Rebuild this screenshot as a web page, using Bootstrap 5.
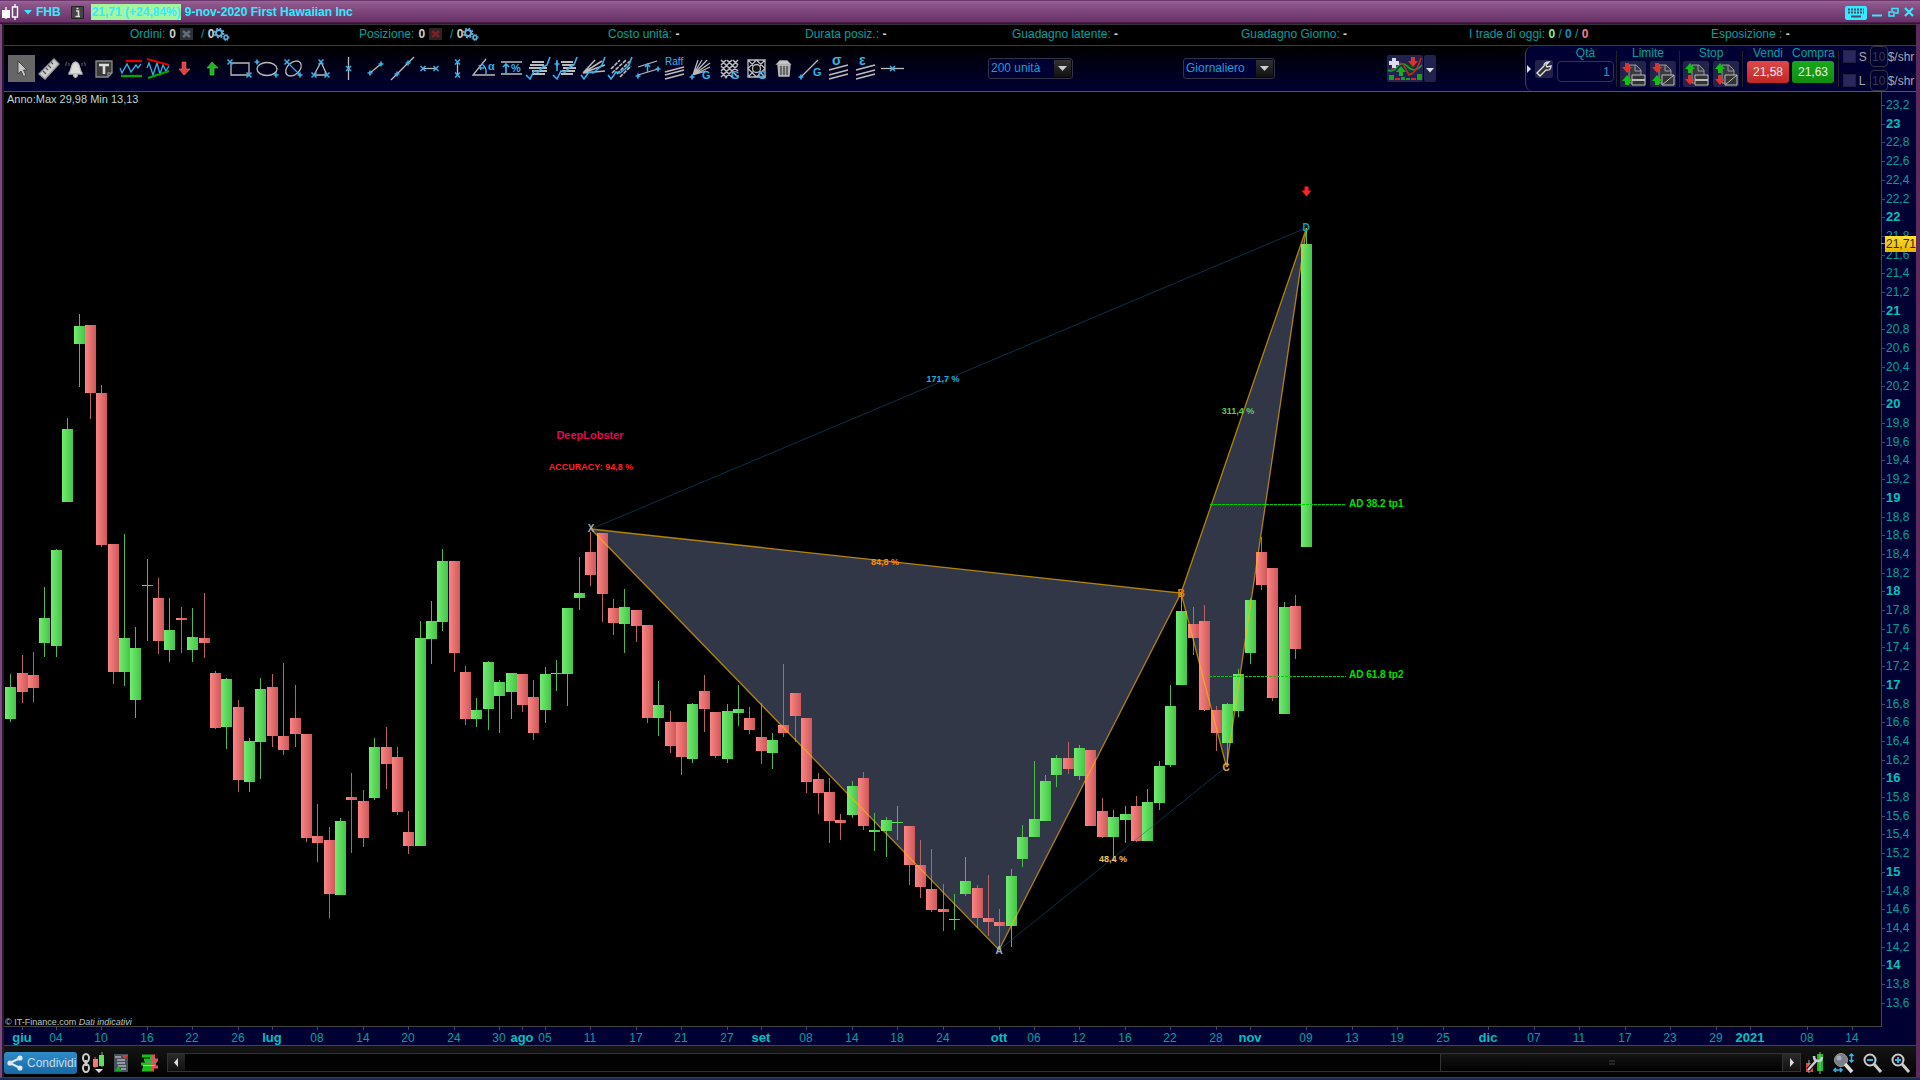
<!DOCTYPE html>
<html lang="it">
<head>
<meta charset="utf-8">
<meta name="viewport" content="width=device-width, initial-scale=1">
<title>FHB - First Hawaiian Inc</title>
<link href="https://cdn.jsdelivr.net/npm/bootstrap@5.3.0/dist/css/bootstrap.min.css" rel="stylesheet">
<style>
:root{--teal:#00a0a0;--aqua:#35eaff;--navy:#000033;--edge:#3c3c3c;--pick:#35b4e8}
body{background:#000;color:var(--teal);font:12px/16px "Liberation Sans",Arial,sans-serif;overflow:hidden}
.frame{min-height:0;background:#000;border:solid #5e2a5e;border-width:0 4px 1px 4px;border-left-style:ridge;border-left-color:#7c4a80}
.desk{height:2px;background:#1b2a52}
button{font:inherit;color:inherit;background:none;border:0;padding:0;display:block}
svg{display:block;overflow:visible;flex-shrink:0}
.titlebar{height:24px;margin:0 -4px;padding:0 6px 0 2px;background:linear-gradient(#4b184b 0,#9a6298 5%,#8a5488 20%,#673067 92%,#3a103a 95%);color:var(--aqua);font-weight:bold}
.info{margin-left:10px}
.quote{background:#a5f5a0;padding:1px 0 1px 1px;line-height:14px;margin-left:7px}
.winbtns{gap:5px}
.stats{height:22px;padding:0 0 2px 126px;display:grid;grid-template-columns:229fr 249fr 197fr 207fr 229fr 228fr 242fr 205fr;align-items:center;border-bottom:1px solid var(--edge);border-top:1px solid #333}
.stats b{color:#d0d0d0}
.stats .won{color:#90e890}
.stats .even{color:#1888c0}
.stats .lost{color:#f08080}
.toolbar{height:46px;padding-bottom:1px;background:linear-gradient(#000,#000033);border-bottom:1px solid #555}
.tools{width:898px;margin-left:4px}
.tools svg{width:27px;height:27px;fill:none;stroke:#bbb;stroke-width:1.3}
.tools .on{background:#666}
.tools .c{stroke:var(--pick)}
.tools text{font:bold 11px "Liberation Sans",Arial,sans-serif;fill:var(--pick);stroke:none}
.tools .plain{font-size:10px;font-weight:400}
.tools .greek{font-size:14px}
.pickbox{height:21px}
.pickbox select{appearance:none;width:100%;height:21px;font:inherit;color:#0f9fd8;background:var(--navy);border:1px solid #333348;border-radius:3px;padding:0 2px}
.pickbox .knob{position:absolute;right:2px;top:2px;width:17px;height:17px;background:linear-gradient(#333,#111);pointer-events:none}
.units{width:85px;margin-left:82px}
.period{width:92px;margin-left:110px}
.indic{margin-left:112px;height:27px;gap:1px}
.indic .face,.indic .drop{background:#22224f;height:27px;border-radius:2px}
.order{width:391px;height:45px;background:var(--navy);border-left:1px solid #444;border-radius:8px 0 0 8px}
.sq{background:#22224a;border-radius:2px}
.sep{width:1px;height:36px;background:#222;align-self:center}
.qtybox{margin:0 2px 0 4px}
.pair{padding:0 3px}
.fieldbox{background:#000030;border:1px solid #333344;border-radius:4px;color:#0f9fd8;font:inherit;text-align:right;padding:0 3px}
.qty{width:57px;height:21px}
.capt{line-height:14px;height:15px;text-align:center}
.deals{gap:3px;margin:0 3px 0 4px}
.deal{width:42px;height:22px;color:#f0f0f0;border-radius:3px}
.sell{background:linear-gradient(#e04848,#c02828)}
.buy{background:linear-gradient(#18a818,#0f8c0f)}
.tick{appearance:none;width:13px;height:13px;background:#28285c;border:1px solid #202044;margin:0}
.tag{width:8px;margin:0 3px}
.small10{width:18px;height:21px;color:#383850;padding:0 1px;text-align:center}
.exits{color:#aaa}
.plot{min-height:0}
.plot svg{width:100%;height:100%;font-family:"Liberation Sans",Arial,sans-serif;font-size:12px}
.footbar{height:31px;padding-top:2px;background:linear-gradient(#151515,#020202)}
.share{width:73px;height:22px;padding-left:3px;background:linear-gradient(#2f8cc8,#1768a4);border-radius:3px;color:#c8dcec}
.depth{margin-left:13px}
.scroller{height:19px;border:1px solid #333;background:#020202}
.scroller button{width:17px;height:17px;background:linear-gradient(#2a2a2a,#111)}
.thumb{width:21%;height:17px;background:linear-gradient(#151515,#000);border:solid #333;border-width:0 1px}
.zooms{margin:0 6px 0 4px}
</style>
<script src="https://cdn.jsdelivr.net/npm/bootstrap@5.3.0/dist/js/bootstrap.bundle.min.js"></script>
</head>
<body>
<svg width="0" height="0" class="position-absolute" aria-hidden="true">
<defs>
<g id="mx"><path d="M-2.5-2.5l5 5M2.5-2.5l-5 5" stroke="#35b4e8" stroke-width="1.5"/></g>
<g id="mp"><path d="M-2.5 0h5M0-2.5v5" stroke="#35b4e8" stroke-width="1.7"/></g>
<g id="gears" fill="none" stroke="#5fb0dc"><circle cx="5" cy="5" r="3" stroke-width="2"/><circle cx="5" cy="5" r="4.6" stroke-width="1.6" stroke-dasharray="1.9 1.7"/><circle cx="12" cy="9.500" r="1.900" stroke-width="1.500"/><circle cx="12" cy="9.500" r="3" stroke-dasharray="1.300 1.100"/></g>
<g id="sheet"><path d="M9 4h7l5 5v13H9z" fill="#3a3a44" stroke="#999"/><path d="M15 4v6h6" fill="none" stroke="#999"/></g>
<path id="dn" d="M-2-5h4v4h3L0 5l-5-6h3z"/>
<path id="up" d="M-2 5h4V1h3L0-5l-5 6h3z"/>
</defs>
</svg>
<div class="vh-100 d-flex flex-column">
<div class="frame d-flex flex-column flex-grow-1">

<header class="titlebar d-flex align-items-center text-nowrap">
  <svg width="18" height="20" viewBox="0 0 18 20"><path d="M4 5v12M13 2v16" stroke="#fff" stroke-width="1.300"/><path d="M0 8h8v8H0z" fill="#fff"/><path d="M10.500 5h5v10h-5z" fill="#76447a" stroke="#fff" stroke-width="1.400"/></svg>
  <button class="ms-1" aria-label="Menu"><svg width="8" height="5" viewBox="0 0 8 5"><path d="M0 0h8L4 4.500z" fill="#35eaff"/></svg></button>
  <span class="ms-1">FHB</span>
  <button class="info" aria-label="Informazioni"><svg width="13" height="13" viewBox="0 0 13 13"><path d="M.5.5h12v12H.5z" fill="#444" stroke="#222"/><path d="M5 5h2.500v5M4.500 10.500h4.500M5.500 2.500h2" stroke="#ddd" stroke-width="1.600" fill="none"/></svg></button>
  <span class="quote">21,71 (+24,84%)</span>
  <span class="ms-1">9-nov-2020 First Hawaiian Inc</span>
  <div class="winbtns ms-auto d-flex align-items-center">
    <button aria-label="Tastiera"><svg width="22" height="15" viewBox="0 0 22 15"><rect y="1" width="22" height="14" rx="2" fill="#35eaff"/><path d="M3 4.500h16M3 7.500h16" stroke="#4a4a6a" stroke-width="1.800" stroke-dasharray="2 1"/><path d="M6 11.500h10" stroke="#4a4a6a" stroke-width="2"/></svg></button>
    <button aria-label="Riduci"><svg width="11" height="14" viewBox="0 0 11 14"><path d="M0 10.500h10" stroke="#35eaff" stroke-width="2"/></svg></button>
    <button aria-label="Ripristina"><svg width="11" height="11" viewBox="0 0 11 11" fill="none" stroke="#35eaff" stroke-width="1.500"><path d="M1 5h5v4H1zM4 4V1.500h6V6H7"/></svg></button>
    <button aria-label="Chiudi"><svg width="10" height="10" viewBox="0 0 10 10"><path d="M1 1l8 8M9 1L1 9" stroke="#35eaff" stroke-width="2.200"/></svg></button>
  </div>
</header>

<section class="stats text-nowrap">
  <div class="d-flex align-items-center">Ordini:<b class="ms-1">0</b><svg class="ms-1" width="13" height="12" viewBox="0 0 13 12"><path d="M0 0h13v12H0z" fill="#2c3138"/><path d="M3 3l7 6M10 3L3 9" stroke="#646c78" stroke-width="2.500"/></svg><span class="ms-2">/ <b>0</b></span><svg width="16" height="13" viewBox="0 0 16 13"><use href="#gears"/></svg></div>
  <div class="d-flex align-items-center">Posizione:<b class="ms-1">0</b><svg class="ms-1" width="13" height="12" viewBox="0 0 13 12"><path d="M0 0h13v12H0z" fill="#2c2424"/><path d="M3 3l7 6M10 3L3 9" stroke="#7c2028" stroke-width="2.500"/></svg><span class="ms-2">/ <b>0</b></span><svg width="16" height="13" viewBox="0 0 16 13"><use href="#gears"/></svg></div>
  <div>Costo unità: <b>-</b></div>
  <div>Durata posiz.: <b>-</b></div>
  <div>Guadagno latente: <b>-</b></div>
  <div>Guadagno Giorno: <b>-</b></div>
  <div>I trade di oggi: <b class="won">0</b> / <b class="even">0</b> / <b class="lost">0</b></div>
  <div>Esposizione : <b>-</b></div>
</section>

<section class="toolbar d-flex">
  <div class="tools d-flex justify-content-between align-items-center flex-shrink-0">
    <button class="on" aria-label="Cursore"><svg viewBox="0 0 27 27"><path d="M10 6v13l3-3 2.500 5.500 2.500-1-2.500-5.500h3.500z" fill="#c8c8c8" stroke="#333" stroke-width=".8"/></svg></button>
    <button aria-label="Righello"><svg viewBox="0 0 27 27"><path d="M19 4l5 5L10 24l-6-5z" fill="#ccc" stroke="#999"/><path d="M8 16l3 3M11 13l2 2M13 10l3 3M16 7l2 2" stroke="#555"/></svg></button>
    <button aria-label="Allarme"><svg viewBox="0 0 27 27"><path d="M7 18c3-2 1-10 6.500-11 5.500 1 3.500 9 6.500 11v1H7z" fill="#ddd" stroke="#bbb"/><circle cx="13.500" cy="20.500" r="1.800" fill="#ddd"/><path d="M5 7q-2 2-1 4M7 8v3M22 7q2 2 1 4M20 8v3" stroke="#777" stroke-width=".8"/></svg></button>
    <button aria-label="Testo"><svg viewBox="0 0 27 27"><path d="M6 6h16v12l-4 4H6z" fill="#3c3c3c" stroke="#888"/><path d="M9 10h10M14 10v9" stroke="#ddd" stroke-width="2.600"/><path d="M18 22v-4h4" stroke="#888"/></svg></button>
    <button aria-label="Supporti"><svg viewBox="0 0 27 27"><path class="c" d="M3 13l2 5 5-9 4 8 5-7 2 3 3-4"/><path d="M9 6h16" stroke="#e00000" stroke-width="2.300"/><path d="M4 21h21" stroke="#0a0" stroke-width="2.300"/></svg></button>
    <button aria-label="Figure"><svg viewBox="0 0 27 27"><path class="c" d="M3 13l2-5 4 12 4-12 3 11 3-9 3 6 3-5"/><path d="M3 4l22 6" stroke="#e00000" stroke-width="2.300"/><path d="M4 23l21-7" stroke="#0a0" stroke-width="2.300"/></svg></button>
    <button aria-label="Freccia giù"><svg viewBox="0 0 27 27"><path d="M11 7h4v7h4l-6 6-5-6h3z" fill="#e04040" stroke="#f07070" stroke-width=".6"/></svg></button>
    <button aria-label="Freccia su"><svg viewBox="0 0 27 27"><path d="M11 20h4v-7h4l-6-6-5 6h3z" fill="#20b020" stroke="#50d050" stroke-width=".6"/></svg></button>
    <button aria-label="Rettangolo"><svg viewBox="0 0 27 27"><path d="M5 8h18v12H5z"/><use href="#mx" x="4" y="7"/><use href="#mx" x="23" y="20"/></svg></button>
    <button aria-label="Ellisse"><svg viewBox="0 0 27 27"><ellipse cx="14" cy="14" rx="10" ry="6.500"/><use href="#mp" x="4" y="7"/><use href="#mp" x="23" y="20"/></svg></button>
    <button aria-label="Ellisse inclinata"><svg viewBox="0 0 27 27"><ellipse cx="13.500" cy="13.500" rx="9" ry="6" transform="rotate(-42 13.500 13.500)"/><path class="c" d="M7 7l13 13" stroke-width="1.100"/><use href="#mx" x="7" y="7"/><use href="#mp" x="20" y="20"/></svg></button>
    <button aria-label="Triangolo"><svg viewBox="0 0 27 27"><path d="M14 7l6 13H7z"/><use href="#mx" x="14" y="7"/><use href="#mx" x="20" y="20"/><use href="#mx" x="7" y="20"/></svg></button>
    <button aria-label="Linea verticale"><svg viewBox="0 0 27 27"><path d="M13.500 2v23"/><use href="#mx" x="13.500" y="13.500"/></svg></button>
    <button aria-label="Segmento"><svg viewBox="0 0 27 27"><path d="M8 18l11-9"/><use href="#mp" x="8" y="18"/><use href="#mp" x="19" y="9"/></svg></button>
    <button aria-label="Retta"><svg viewBox="0 0 27 27"><path d="M2 25L25 2"/><use href="#mp" x="8" y="19"/><use href="#mp" x="19" y="8"/></svg></button>
    <button aria-label="Segmento orizzontale"><svg viewBox="0 0 27 27"><path d="M7 13.500h13"/><use href="#mx" x="7" y="13.500"/><use href="#mx" x="20" y="13.500"/></svg></button>
    <button aria-label="Segmento verticale"><svg viewBox="0 0 27 27"><path d="M13.500 7v13"/><use href="#mx" x="13.500" y="7"/><use href="#mx" x="13.500" y="20"/></svg></button>
    <button aria-label="Angolo"><svg viewBox="0 0 27 27"><path d="M24 20H2L15 4"/><path class="c" d="M11 9q5 4 4 10M8 13h5M8 10l2 5" stroke-width="1.500"/><text x="17" y="15">α</text></svg></button>
    <button aria-label="Percentuale"><svg viewBox="0 0 27 27"><path d="M3 7h21M3 19h21"/><path class="c" d="M8 18V9M5 12l3-3 3 3" stroke-width="1.700"/><text x="13" y="17">%</text></svg></button>
    <button aria-label="Ritracciamenti"><svg viewBox="0 0 27 27"><path d="M7 7h12M5 10h14M4 13h18M7 16h15M7 19h13" stroke-width="1.800"/><path class="c" d="M1 20l4 4 4-8 4 1 5-5 4-2 3-8" stroke-width="1.600"/></svg></button>
    <button aria-label="Estensioni"><svg viewBox="0 0 27 27"><path d="M9 7h12M10 10h12M11 13h13M10 16h13M9 19h12" stroke-width="1.800"/><path class="c" d="M1 20l4 4 4-8 4 1 5-5 4-2 3-8M5 5v11" stroke-width="1.600"/><use href="#mp" x="5" y="9"/></svg></button>
    <button aria-label="Ventaglio"><svg viewBox="0 0 27 27"><path d="M3 18L15 5M3 18L22 6M3 18l22-8M3 18l22-2" stroke-width="1.500"/><path class="c" d="M1 20l3 4 5-7 4 1 5-4 4-4 3-8" stroke-width="1.600"/></svg></button>
    <button aria-label="Canale"><svg viewBox="0 0 27 27"><path d="M4 14l9-9M5 18L19 5M10 19l13-13M13 22l11-11" stroke-width="1.600" stroke-dasharray="4 1"/><path class="c" d="M1 20l3 4 5-7 4 1 5-4 4-4 3-8" stroke-width="1.600"/></svg></button>
    <button aria-label="Parallele"><svg viewBox="0 0 27 27"><path d="M4 12l19-6M4 20l20-6"/><path class="c" d="M13.500 17V9M11 12l2.500-3 2.500 3" stroke-width="1.500"/><use href="#mp" x="4" y="21"/><use href="#mp" x="24" y="14"/></svg></button>
    <button aria-label="Raff"><svg viewBox="0 0 27 27"><text class="plain" x="4" y="10">Raff</text><path d="M4 17l19-5M4 20l19-5M4 24l19-5" stroke-width="1.600"/></svg></button>
    <button aria-label="Ventaglio di Gann"><svg viewBox="0 0 27 27"><path d="M5 20L10 5M5 20l9-15M5 20L19 5M5 20L22 8M5 20l17-8M5 20l13-4"/><use href="#mp" x="4" y="22"/><text x="14" y="24">G</text></svg></button>
    <button aria-label="Griglia di Gann"><svg viewBox="0 0 27 27"><path d="M5 10l5-5M5 16L16 5M5 22L22 5M9 23L22 10M5 17l6 6M5 11l12 12M5 5l17 17M11 5l11 11M17 5l5 5" stroke-width="1.500"/><text x="15" y="24">G</text></svg></button>
    <button aria-label="Quadrato di Gann"><svg viewBox="0 0 27 27"><path d="M5 5h17v17H5zM5 5l17 17M22 5L5 22M13.500 5L22 13.500 13.500 22 5 13.500z"/><circle cx="13.500" cy="13.500" r="4" fill="#111"/><text x="15" y="24">G</text></svg></button>
    <button aria-label="Elimina"><svg viewBox="0 0 27 27"><path d="M8 10h12l-1 11H9z" fill="#aaa"/><path d="M7 9h13l-3-3h-7z" fill="#ccc"/><path d="M11 11v9M14 11v9M17 11v9" stroke="#444"/></svg></button>
    <button aria-label="Linea di Gann"><svg viewBox="0 0 27 27"><path d="M5 21L21 5"/><use href="#mp" x="4" y="22"/><text x="16" y="21">G</text></svg></button>
    <button aria-label="Deviazione standard"><svg viewBox="0 0 27 27"><text class="greek" x="7" y="10">σ</text><path d="M4 15l19-5M4 20l19-5M4 24l19-5" stroke-width="1.600"/></svg></button>
    <button aria-label="Errore standard"><svg viewBox="0 0 27 27"><text class="greek" x="7" y="10">ε</text><path d="M4 15l19-5M4 20l19-5M4 24l19-5" stroke-width="1.600"/></svg></button>
    <button aria-label="Linea orizzontale"><svg viewBox="0 0 27 27"><path d="M2 13.500h23"/><use href="#mx" x="13.500" y="13.500"/></svg></button>
  </div>
  <div class="pickbox units position-relative align-self-center"><select aria-label="Unità"><option>200 unità</option></select><span class="knob"><svg width="17" height="17" viewBox="0 0 17 17"><path d="M4 6h9l-4.500 5z" fill="#ccc"/></svg></span></div>
  <div class="pickbox period position-relative align-self-center"><select aria-label="Periodo"><option>Giornaliero</option></select><span class="knob"><svg width="17" height="17" viewBox="0 0 17 17"><path d="M4 6h9l-4.500 5z" fill="#ccc"/></svg></span></div>
  <div class="indic d-flex align-self-center">
    <button class="face" aria-label="Indicatori"><svg width="36" height="27" viewBox="0 0 36 27" fill="none"><path d="M16 8l7 11 6-8-5-2z" fill="#0c4020"/><path d="M1 15q4 3 9-3t10-1q7 8 15-1" stroke="#18a040" stroke-width="1.600"/><path d="M4 15q7-9 12-6l6 11q8-2 12-17" stroke="#c02828" stroke-width="1.600"/><path d="M7 3v10M2 8h10" stroke="#dde" stroke-width="4"/><use href="#up" x="14" y="16" fill="#10b020"/><use href="#dn" x="26" y="7" fill="#e03030"/><path d="M2 25v-5h5v5zM14 25v-3h4v3zM30 25v-6h5v6z" fill="#18a020"/><path d="M8 24h5M24 24h5" stroke="#d02828" stroke-width="2"/><path d="M19 24h4" stroke="#18a020" stroke-width="2"/></svg></button>
    <button class="drop" aria-label="Altri indicatori"><svg width="12" height="27" viewBox="0 0 12 27"><path d="M2 13h8l-4 4.500z" fill="#ddd"/></svg></button>
  </div>
  <div class="order ms-auto d-flex flex-shrink-0">
    <svg class="align-self-center" width="9" height="10" viewBox="0 0 9 10"><path d="M1 1l4 4-4 4z" fill="#ddd"/></svg>
    <button class="sq align-self-center" aria-label="Impostazioni ordini"><svg width="18" height="18" viewBox="0 0 18 18"><path d="M2 13l7-7q0-4 5-4l-3 3 1 2 4-1q0 5-5 4l-6 6z" fill="#333" stroke="#ddd" stroke-width="1.400"/></svg></button>
    <div class="qtybox"><label class="capt d-block" for="qty">Qtà</label><input id="qty" class="fieldbox qty d-block" value="1"></div>
    <span class="sep"></span>
    <div class="pair"><div class="capt">Limite</div><div class="d-flex gap-1">
      <button class="sq" aria-label="Limite"><svg width="26" height="26" viewBox="0 0 26 26"><use href="#sheet"/><path d="M12 14h13v10H12z" fill="#333" stroke="#bbb"/><path d="M12 19h13" stroke="#bbb" stroke-width="2"/><use href="#dn" x="7" y="7" fill="#e03030"/><use href="#up" x="7" y="19" fill="#10c010"/></svg></button>
      <button class="sq" aria-label="Limite diagonale"><svg width="26" height="26" viewBox="0 0 26 26"><use href="#sheet"/><path d="M12 14h12v10H12zM24 14L12 24" fill="#333" stroke="#bbb"/><use href="#dn" x="7" y="7" fill="#e03030"/><use href="#up" x="7" y="19" fill="#10c010"/></svg></button></div></div>
    <span class="sep"></span>
    <div class="pair"><div class="capt">Stop</div><div class="d-flex gap-1">
      <button class="sq" aria-label="Stop"><svg width="26" height="26" viewBox="0 0 26 26"><use href="#sheet"/><path d="M12 14h13v10H12z" fill="#333" stroke="#bbb"/><path d="M12 19h13" stroke="#bbb" stroke-width="2"/><use href="#up" x="7" y="7" fill="#10c010"/><use href="#dn" x="7" y="19" fill="#e03030"/></svg></button>
      <button class="sq" aria-label="Stop diagonale"><svg width="26" height="26" viewBox="0 0 26 26"><use href="#sheet"/><path d="M12 14h12v10H12zM24 14L12 24" fill="#333" stroke="#bbb"/><use href="#up" x="7" y="7" fill="#10c010"/><use href="#dn" x="7" y="19" fill="#e03030"/></svg></button></div></div>
    <span class="sep"></span>
    <div class="deals d-flex">
      <div><div class="capt">Vendi</div><button class="deal sell">21,58</button></div>
      <div><div class="capt">Compra</div><button class="deal buy">21,63</button></div>
    </div>
    <span class="sep"></span>
    <div class="exits ms-1 d-flex flex-column justify-content-between">
      <div class="d-flex align-items-center"><input class="tick" type="checkbox" id="cs"><label class="tag" for="cs">S</label><input class="fieldbox small10" value="10" aria-label="Stop per azione"><span>$/shr</span></div>
      <div class="d-flex align-items-center"><input class="tick" type="checkbox" id="cl"><label class="tag" for="cl">L</label><input class="fieldbox small10" value="10" aria-label="Limite per azione"><span>$/shr</span></div>
    </div>
  </div>
</section>

<main class="flex-grow-1 plot"><svg id="chart" viewBox="4 92 1912 954" role="img" aria-label="Grafico a candele FHB">
  <defs>
    <linearGradient id="gu"><stop offset="0" stop-color="#72ec72"/><stop offset="1" stop-color="#45c545"/></linearGradient>
    <linearGradient id="gd"><stop offset="0" stop-color="#fa8585"/><stop offset="1" stop-color="#d05858"/></linearGradient>
    <linearGradient id="gy" x2="0" y2="1"><stop offset="0" stop-color="#ffe030"/><stop offset="1" stop-color="#e8b400"/></linearGradient>
  </defs>
  <path d="M1881 92h35v954H4v-20h1877z" fill="#000033"/>
  <path d="M1881.500 92v934.500H4M4 1045.500h1912" fill="none" stroke="#444"/>
  <g fill="#323747"><path d="M591 529L1181 593 999 950z"/><path d="M1181 593L1306.500 228 1226.500 767z"/></g>
  <g id="bars"></g>
  <path d="M591 529L1306 228M999 950L1226 767" stroke="#1a6090" stroke-opacity=".5"/>
  <path d="M591 529L1181 593 999 950zM1181 593L1306.500 228 1226.500 767z" fill="none" stroke="#ffb800" stroke-opacity=".65" stroke-width="1.300"/>
  <path d="M1210 504.500h136M1209 676.500h137" stroke="#00d000" stroke-dasharray="3 1"/>
  <use href="#dn" x="1306.500" y="191.500" fill="#ff2020"/>
  <g font-weight="bold" text-anchor="middle">
    <g font-size="9">
      <text x="943" y="382" fill="#20b0e0">171,7 %</text>
      <text x="1238" y="414" fill="#60c860">311,4 %</text>
      <text x="885" y="565" fill="#ff8c10">84,8 %</text>
      <text x="1113" y="862" fill="#f0c060">48,4 %</text>
      <text x="591" y="470" fill="#ff2020">ACCURACY: 94,8 %</text>
    </g>
    <text x="590" y="439" font-size="11" fill="#e00858">DeepLobster</text>
    <g font-size="10"><text x="591" y="532" fill="#a0b0c0">X</text><text x="999" y="954" fill="#a0b0c0">A</text><text x="1181" y="597" fill="#f08000">B</text><text x="1226" y="771" fill="#d8a850">C</text><text x="1306" y="231" fill="#10a0c8">D</text></g>
  </g>
  <g font-weight="bold" font-size="10" fill="#00e000"><text x="1349" y="507">AD 38.2 tp1</text><text x="1349" y="678">AD 61.8 tp2</text></g>
  <text x="7" y="103" font-size="11" fill="#b8d8d8">Anno:Max 29,98 Min 13,13</text>
  <text x="5" y="1025" font-size="9" fill="#b8c8c8">© IT-Finance.com <tspan font-style="italic">Dati indicativi</tspan></text>
  <g id="prices" fill="#00a0a0"></g>
  <g id="dates" fill="#00a0a0" text-anchor="middle"></g>
  <path d="M1881 243.500h4" stroke="#35b4e8"/>
  <path d="M1885 236h31v16h-31z" fill="url(#gy)"/><text x="1886" y="248" fill="#302800">21,71</text>
</svg></main>

<footer class="footbar d-flex align-items-center">
  <button class="share d-flex align-items-center"><svg width="16" height="16" viewBox="0 0 16 16" fill="#dde8f0"><path d="M3 8l10-5M3 8l10 5" stroke="#dde8f0" stroke-width="2"/><circle cx="3" cy="8" r="2.600"/><circle cx="13" cy="3" r="2.600"/><circle cx="13" cy="13" r="2.600"/></svg><span class="ms-1">Condividi</span></button>
  <button class="ms-1" aria-label="Collega grafico"><svg width="25" height="22" viewBox="0 0 25 22"><g fill="none" stroke="#ccc" stroke-width="2"><ellipse cx="5" cy="6" rx="3" ry="4"/><ellipse cx="5" cy="16" rx="3" ry="4"/><path d="M5 8v6" stroke-width="2.500"/></g><path d="M14 5v11" stroke="#e06060"/><path d="M12 7h5v8h-5z" fill="#f07878"/><path d="M21 0v15" stroke="#50d050"/><path d="M18 3h5v11h-5z" fill="#60e060"/><path d="M14 17h8l-4 4z" fill="#ddd"/></svg></button>
  <button class="ms-2" aria-label="Ordini"><svg width="14" height="18" viewBox="0 0 14 18"><path d="M0 0h14v18H0z" fill="#48505c"/><path d="M1 3h6M3 6h8M3 9h8M4 12h8M7 15h5" stroke="#a8b0b8" stroke-width="1.500"/><path d="M8 1h6l-3 4z" fill="#f03030"/><path d="M1 17l3-5 4 5z" fill="#10b020"/></svg></button>
  <button class="depth" aria-label="Profondità"><svg width="18" height="18" viewBox="0 0 18 18"><path d="M1 2h9M3 6h7M0 10h10M2 13h8M1 16h9" stroke="#18c018" stroke-width="3"/><path d="M10 2h4M10 6h7M10 10h5M10 13h7M10 16h3" stroke="#f04848" stroke-width="3"/><path d="M9 4h5M4 8h12M2 11.500h12" stroke="#bbb"/></svg></button>
  <div class="scroller ms-2 flex-grow-1 d-flex" role="scrollbar" aria-label="Scorrimento" aria-controls="chart" aria-valuenow="100">
    <button aria-label="Indietro"><svg width="17" height="17" viewBox="0 0 17 17"><path d="M10 4v9L6 8.500z" fill="#ddd"/></svg></button>
    <div class="thumb ms-auto d-flex justify-content-center align-items-center"><svg width="6" height="5" viewBox="0 0 6 5"><path d="M0 1h6M0 4h6" stroke="#444"/></svg></div>
    <button aria-label="Avanti"><svg width="17" height="17" viewBox="0 0 17 17"><path d="M7 4v9l4-4.500z" fill="#ddd"/></svg></button>
  </div>
  <div class="zooms d-flex gap-2">
    <button aria-label="Impostazioni"><svg width="20" height="22" viewBox="0 0 20 22"><path d="M12 2h6v17h-6z" fill="#10c020"/><path d="M1 11h7v9H1z" fill="#e04848"/><path d="M15 0v22M4 8v13" stroke="#aaa"/><path d="M3 18L11 9" stroke="#111" stroke-width="4.500"/><path d="M3 18L11 9M9 4q0 5 4 5 4 0 4-4" stroke="#ccc" stroke-width="2.500" fill="none"/></svg></button>
    <button aria-label="Zoom adatta"><svg width="21" height="22" viewBox="0 0 21 22"><circle cx="8" cy="8" r="6.500" fill="#777f88" stroke="#999"/><circle cx="6" cy="6" r="2.500" fill="#aab"/><path d="M12 12l7 8" stroke="#ddd" stroke-width="3.500"/><path d="M18.500 2v8M16.500 4l2-2 2 2M16.500 8l2 2 2-2M1 18h8M3 16l-2 2 2 2M7 16l2 2-2 2" fill="none" stroke="#35b4e8" stroke-width="1.500"/></svg></button>
    <button aria-label="Riduci zoom"><svg width="20" height="20" viewBox="0 0 20 20"><circle cx="8" cy="7" r="5.500" fill="none" stroke="#ccc" stroke-width="2"/><path d="M5 7h6" stroke="#35b4e8" stroke-width="2"/><path d="M12 11l7 8" stroke="#ccc" stroke-width="3"/></svg></button>
    <button aria-label="Aumenta zoom"><svg width="20" height="20" viewBox="0 0 20 20"><circle cx="8" cy="7" r="5.500" fill="none" stroke="#ccc" stroke-width="2"/><path d="M5 7h6M8 4v6" stroke="#35b4e8" stroke-width="2"/><path d="M12 11l7 8" stroke="#ccc" stroke-width="3"/></svg></button>
  </div>
</footer>
</div>
<div class="desk flex-shrink-0"></div>
</div>
<script>
// Each bar: direction, then high, body top, body bottom, low on the plot's vertical scale
const bars = `g674,687,719,722 r655,673,692,703 r652,675,688,702 g587,618,643,657 g549,550,646,657 g418,429,502,502 g314,326,344,387 r325,325,393,419 r385,393,545,547 r544,544,672,684
g534,638,672,686 g627,648,700,718 g559,585,586,641 r578,598,641,654 g598,630,650,662 r607,618,620,653 g608,637,650,662 r593,638,643,658 r671,673,728,729 g678,679,727,749
r700,707,780,792 g738,741,782,792 g678,689,742,779 r674,687,736,747 r663,736,750,755 r685,718,734,747 r734,734,838,842 r804,836,843,862 r827,840,894,918 g818,821,895,895
r773,797,800,853 r790,801,838,847 g738,747,798,800 r727,747,764,789 r747,757,812,815 r811,832,846,854 g621,638,846,846 g601,621,639,664 g549,561,622,631 r561,561,653,672
r666,672,719,725 g698,710,719,727 g661,662,709,730 g680,682,696,733 g673,673,692,719 r674,674,705,712 r680,697,733,740 g667,674,710,723 g660,673,674,691 g608,608,674,706
g557,593,598,610 r532,552,575,586 r533,533,594,622 r599,608,623,635 g589,607,624,653 r610,610,626,642 r625,625,718,723 g681,705,718,736 r711,722,746,753 r722,722,757,775
g703,704,759,763 r675,691,709,732 r712,712,756,758 g704,711,759,763 g685,709,713,726 r707,718,730,734 r703,737,751,764 g733,740,753,769 r664,725,733,737 r693,693,716,742
r718,718,782,793 r773,779,793,814 r778,792,821,843 r814,820,823,840 g781,786,815,818 r772,778,826,830 g813,830,832,851 g817,820,831,857 g806,822,823,840 r826,826,865,885
r840,865,887,898 r849,889,910,912 r884,909,912,931 g894,919,920,930 g857,881,894,896 r885,888,918,928 r875,918,922,936 r909,922,926,948 g869,876,926,947 g825,837,859,867
g761,819,837,837 g775,781,821,821 g755,758,775,787 r742,758,769,774 g745,748,776,780 r750,750,826,826 r798,811,837,838 g810,817,837,860 g806,814,820,843 r796,806,841,842
g789,802,841,841 g761,766,803,810 g685,706,765,767 g593,611,685,685 r607,624,638,655 r605,621,710,711 r706,710,733,751 g703,704,743,767 g669,674,711,717 g598,600,653,664
r537,552,585,590 r568,568,698,701 g602,607,714,714 r595,606,649,659 g228,244,547,547`.split(/\s+/);
const barX = i => Math.round(10.3 + 11.37 * i);
document.getElementById('bars').innerHTML = bars.map((b, i) => {
  const [hi, top, bot, lo] = b.slice(1).split(',').map(Number), up = b[0] === 'g', x = barX(i);
  return `<path d="M${x + .5} ${hi}V${lo}" stroke="${up ? '#50b850' : '#b86464'}"/><rect x="${x - 5}" y="${top}" width="11" height="${bot - top}" fill="url(#${up ? 'gu' : 'gd'})"/>`;
}).join('');
// Price axis, one label every 0.2
let axis = '';
for (let n = 116; n >= 68; n--) {
  const y = Math.round(217.3 + (22 - n / 5) * 93.5), whole = n % 5 === 0;
  axis += `<path d="M1882 ${y + .5}h3" stroke="#446"/><text x="1886" y="${y + 4}" ${whole ? 'font-weight="bold" font-size="13" fill="#00c0c0"' : ''}>${whole ? n / 5 : (n / 5).toFixed(1).replace('.', ',')}</text>`;
}
document.getElementById('prices').innerHTML = axis;
// Date axis, label and bar number
const days = 'giu1 04:4 10:8 16:12 22:16 26:20 lug23 08:27 14:31 20:35 24:39 30:43 ago45 05:47 11:51 17:55 21:59 27:63 set66 08:70 14:74 18:78 24:82 ott87 06:90 12:94 16:98 22:102 28:106 nov109 09:114 13:118 19:122 25:126 dic130 07:134 11:138 17:142 23:146 29:150 2021:153 08:158 14:162';
document.getElementById('dates').innerHTML = days.split(' ').map(d => {
  const [, label, n] = d.match(/^([a-z]+|\d+(?=:)):?(\d+)$/), x = barX(+n), big = label.length > 2;
  return `<path d="M${x + .5} 1027v3" stroke="#446"/><text x="${x}" y="1042" ${big ? 'font-weight="bold" font-size="13" fill="#00c0c0"' : ''}>${label}</text>`;
}).join('');
</script>
</body>
</html>
